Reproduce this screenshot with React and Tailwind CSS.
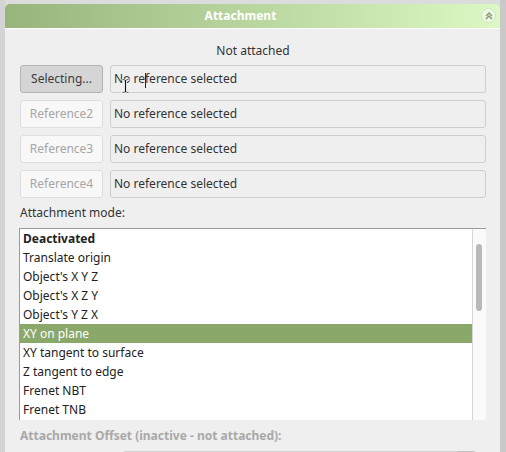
import React from 'react'

const modes = [
  'Deactivated',
  'Translate origin',
  "Object's X Y Z",
  "Object's X Z Y",
  "Object's Y Z X",
  'XY on plane',
  'XY tangent to surface',
  'Z tangent to edge',
  'Frenet NBT',
  'Frenet TNB',
]

const refs = ['Selecting...', 'Reference2', 'Reference3', 'Reference4']

function CollapseIcon() {
  return (
    <div className="absolute right-[4px] top-[4px] w-[15px] h-[15px] rounded-full bg-[#eef8e4] border border-[#d2e6bf] flex items-center justify-center">
      <svg width="8" height="8" viewBox="0 0 8 8" fill="none" stroke="#7f9c62" strokeWidth="1.4">
        <path d="M1 4 L4 1 L7 4" />
        <path d="M1 7 L4 4 L7 7" />
      </svg>
    </div>
  )
}

export default function App() {
  return (
    <div className="w-[506px] h-[452px] overflow-hidden bg-[#dcdcdc] flex" style={{ fontFamily: '"Noto Sans", "Open Sans", sans-serif' }}>
      <div className="w-[5px] shrink-0 bg-[#d4d4d4]" />
      <div className="w-[495px] shrink-0 mt-[4px] flex flex-col">
        {/* header */}
        <div className="relative shrink-0 h-[25px] rounded-t-[5px] bg-gradient-to-r from-[#97b57b] to-[#dcf8c4] flex items-center justify-center pr-[24px] border-b border-white">
          <span className="text-white font-bold text-[12px]">Attachment</span>
          <CollapseIcon />
        </div>

        {/* body */}
        <div className="flex-1 min-h-0 overflow-hidden bg-[#efefef] pl-[15px] pr-[14px] flex flex-col">
          <div className="shrink-0 text-center text-[12px] text-[#333] pt-[13px] h-[36px] leading-[17px]">Not attached</div>

          <div className="shrink-0 flex flex-col gap-[7px]">
            {refs.map((r, i) => (
              <div key={r} className="flex gap-[7px] h-[28px] relative">
                <div className={`w-[83px] rounded-[3px] border flex items-center justify-center text-[12px] ${i === 0 ? 'bg-[#d5d5d5] border-[#b4b4b4] text-[#3c3c3c]' : 'bg-[#f8f8f8] border-[#dedede] text-[#a6a6a6]'}`}>
                  {r}
                </div>
                <div className="flex-1 rounded-[3px] border border-[#cecece] bg-[#efefef] flex items-center pl-[3px] text-[12px] text-[#333]">
                  No reference selected
                </div>
                {i === 0 && (
                  <>
                    <div className="absolute left-[125px] top-[8px] w-px h-[15px] bg-[#222]" />
                    <svg className="absolute left-[101px] top-[13px]" width="9" height="16" viewBox="0 0 9 16">
                      <path d="M1 1 H3.5 L4.5 2 L5.5 1 H8 V2.5 H5.5 V13.5 H8 V15 H5.5 L4.5 14 L3.5 15 H1 V13.5 H3.5 V2.5 H1 Z" fill="#111" stroke="#fff" strokeWidth="0.8" />
                    </svg>
                  </>
                )}
              </div>
            ))}
          </div>

          <div className="shrink-0 text-[12px] text-[#333] h-[30px] flex items-center">Attachment mode:</div>

          <div className="shrink-0 -ml-px h-[192px] bg-white border-t border-l border-[#9a9a9a] flex overflow-hidden">
            <div className="flex-1 flex flex-col">
              {modes.map((m, i) => (
                <div
                  key={m}
                  className={`h-[19px] shrink-0 flex items-center pl-[3px] text-[12px] ${i === 5 ? 'bg-[#8aa86a] text-white' : 'text-[#222]'} ${i === 0 ? 'font-bold' : ''}`}
                >
                  {m}
                </div>
              ))}
            </div>
            <div className="w-[14px] bg-[#fafafa] border-l border-[#d6d6d6] pt-[15px] pl-[3px]">
              <div className="w-[6px] h-[67px] rounded-full bg-[#b9b9b9]" />
            </div>
          </div>

          <div className="shrink-0 text-[12px] font-bold text-[#a9a9a9] h-[31px] flex items-center">
            Attachment Offset (inactive - not attached):
          </div>
          <div className="shrink-0 flex ml-[104px] mr-[11px]">
            <div className="flex-1 border-t border-[#d2d2d2]" />
            <div className="w-[17px] border-t border-[#c4c4c4]" />
          </div>
        </div>
      </div>
      <div className="w-[6px] shrink-0 bg-[#c9c9c9]" />
    </div>
  )
}
